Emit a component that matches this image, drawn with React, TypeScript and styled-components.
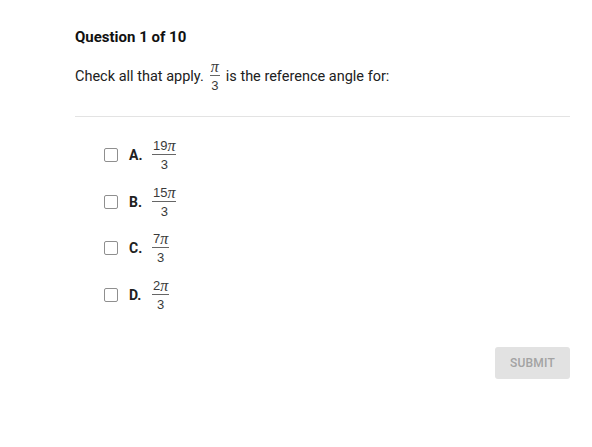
import React from "react";
import styled, { createGlobalStyle } from "styled-components";

const Global = createGlobalStyle`
  html, body { margin: 0; padding: 0; background: #ffffff; }
  body { font-family: Roboto, "Liberation Sans", Arial, sans-serif; color: #212121; }
`;

const Page = styled.div`
  width: 592px;
  height: 447px;
  box-sizing: border-box;
  padding: 27px 22px 0 75px;
  display: flex;
  flex-direction: column;
`;

const Title = styled.h1`
  margin: 0;
  font-size: 15px;
  font-weight: 700;
  line-height: 20px;
  color: #111;
`;

const Prompt = styled.div`
  margin-top: 14.5px;
  height: 29px;
  font-size: 14.5px;
  display: flex;
  align-items: center;
  gap: 6px;
  color: #212121;
`;

const Divider = styled.hr`
  margin: 25.5px 0 0;
  border: 0;
  border-top: 1px solid #e3e3e3;
  width: 100%;
`;

const Options = styled.div`
  margin-top: 14.5px;
  padding-left: 29px;
  display: flex;
  flex-direction: column;
`;

const Row = styled.label`
  height: 46.7px;
  display: flex;
  align-items: center;
`;

const Box = styled.span`
  width: 12px;
  height: 12px;
  border: 1px solid #8f8f8f;
  border-radius: 2px;
  box-sizing: content-box;
`;

const Letter = styled.span`
  margin-left: 11px;
  width: 23px;
  font-size: 14px;
  font-weight: 700;
  color: #212121;
`;

const Frac = styled.span`
  display: inline-flex;
  flex-direction: column;
  align-items: center;
  font-family: "Liberation Sans", Arial, sans-serif;
  font-size: 13px;
  line-height: 1;
  color: #3a3a3a;
`;

const Num = styled.span`
  height: 13px;
  padding: 0 1px 2px;
  border-bottom: 1px solid #666;
  display: flex;
  align-items: flex-end;
`;

const Den = styled.span`
  padding-top: 3px;
`;

const Pi = styled.i`
  font-family: "Liberation Serif", "Times New Roman", serif;
  font-style: italic;
  font-size: 16px;
  line-height: 13px;
`;

const Footer = styled.div`
  margin-top: 28.6px;
  display: flex;
  justify-content: flex-end;
`;

const Submit = styled.button`
  width: 75px;
  height: 32px;
  border: 0;
  border-radius: 3px;
  background: #e2e2e2;
  color: #a3a3a3;
  font-family: Roboto, "Liberation Sans", sans-serif;
  font-size: 12px;
  font-weight: 500;
  letter-spacing: 0.2px;
`;

const Fraction = ({ n }: { n: string }) => (
  <Frac>
    <Num>
      {n}
      <Pi>π</Pi>
    </Num>
    <Den>3</Den>
  </Frac>
);

const opts = [
  { l: "A.", n: "19" },
  { l: "B.", n: "15" },
  { l: "C.", n: "7" },
  { l: "D.", n: "2" },
];

export default function App() {
  return (
    <>
      <Global />
      <Page>
        <Title>Question 1 of 10</Title>
        <Prompt>
          <span>Check all that apply.</span>
          <Fraction n="" />
          <span>is the reference angle for:</span>
        </Prompt>
        <Divider />
        <Options>
          {opts.map((o) => (
            <Row key={o.l}>
              <Box />
              <Letter>{o.l}</Letter>
              <Fraction n={o.n} />
            </Row>
          ))}
        </Options>
        <Footer>
          <Submit>SUBMIT</Submit>
        </Footer>
      </Page>
    </>
  );
}
